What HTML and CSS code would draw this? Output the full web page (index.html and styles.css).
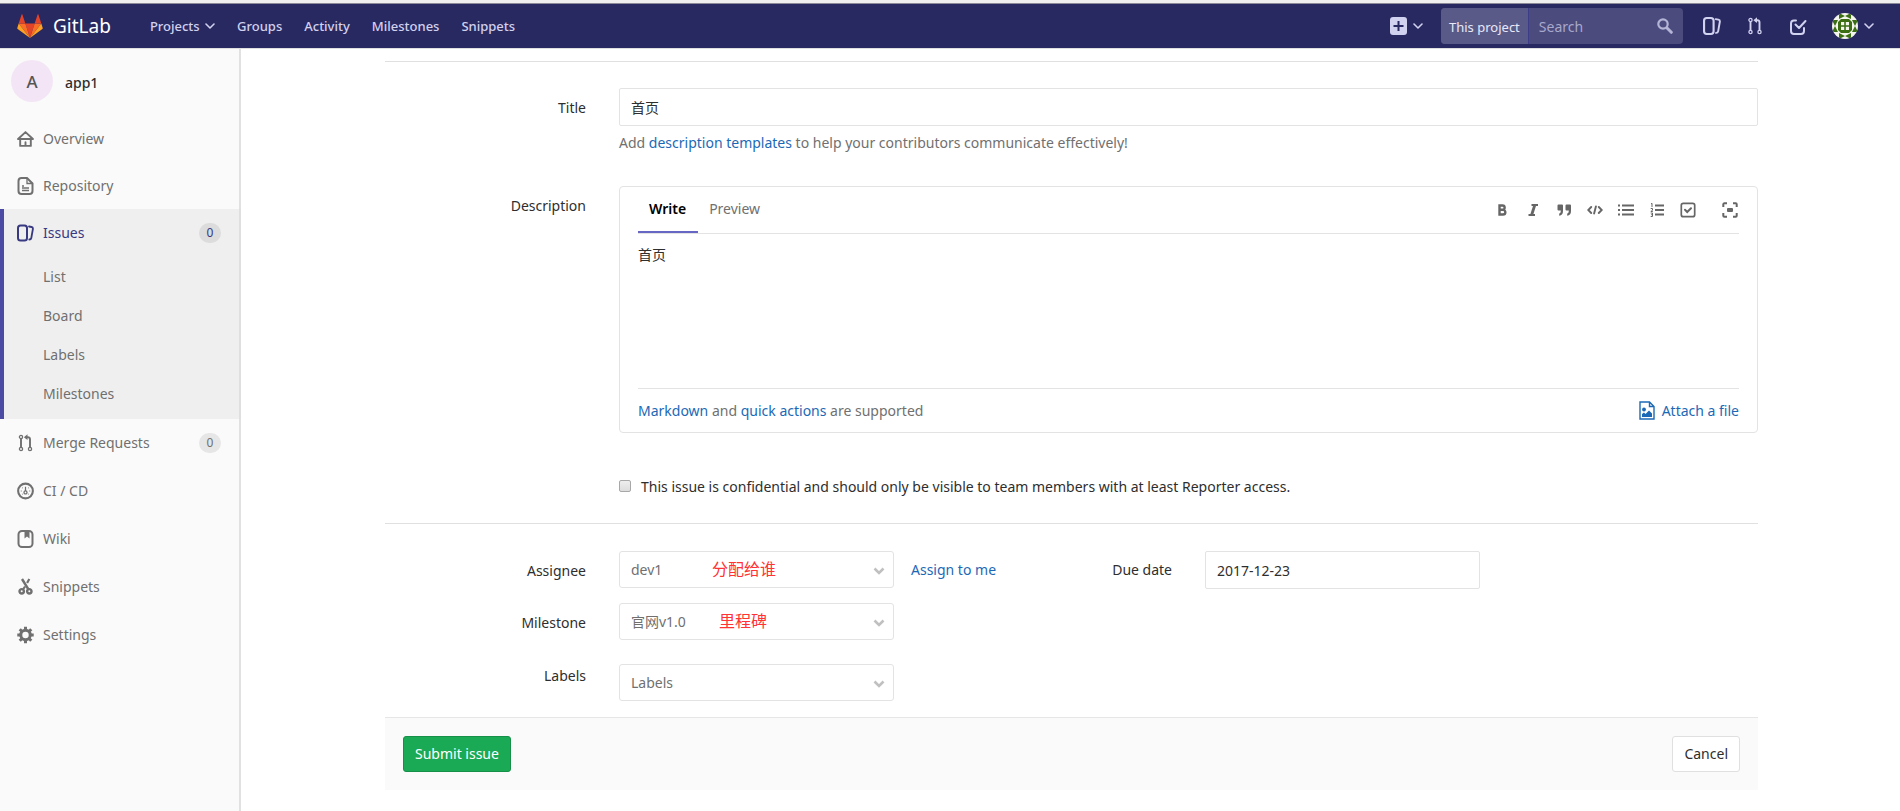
FILE: index.html
```html
<!DOCTYPE html>
<html lang="en">
<head>
<meta charset="utf-8">
<title>New Issue · app1 · GitLab</title>
<link rel="stylesheet" href="styles.css">
</head>
<body>
<svg class="sprite" aria-hidden="true">
  <symbol id="chevron" viewBox="0 0 10 6"><path d="M1 1l4 4 4-4" fill="none" stroke="currentColor" stroke-width="1.6" stroke-linecap="round" stroke-linejoin="round"/></symbol>
  <symbol id="chevron-bold" viewBox="0 0 12 8"><path d="M1.500 1.500L6 6l4.500-4.500" fill="none" stroke="currentColor" stroke-width="2.600"/></symbol>
  <symbol id="home" viewBox="0 0 16 16"><path d="M1 8h14L8 1.5zM3 8v6.500h10V8M8 11v3.500" fill="none" stroke="currentColor" stroke-width="1.800" stroke-linejoin="round" stroke-linecap="round"/></symbol>
  <symbol id="doc" viewBox="0 0 16 18"><path d="M4 1h5.500L15 6.500V14a3 3 0 0 1-3 3H4a3 3 0 0 1-3-3V4a3 3 0 0 1 3-3z" fill="none" stroke="currentColor" stroke-width="2"/><path d="M9.500 1v5.500H15M4.500 9h2M4.500 11h7M4.500 13.500h7" fill="none" stroke="currentColor" stroke-width="1.300"/></symbol>
  <symbol id="issues" viewBox="0 0 17 17"><rect x="1" y="1" width="9" height="15" rx="2.500" fill="none" stroke="currentColor" stroke-width="2"/><path d="M12 2l2.500.5c1 .2 1.600.9 1.400 2L14.300 13.500c-.2 1-.8 1.500-2 1.500" fill="none" stroke="currentColor" stroke-width="1.800" stroke-linecap="round"/></symbol>
  <symbol id="merge" viewBox="0 0 16 18"><g fill="none" stroke="currentColor"><circle cx="3.500" cy="3" r="1.600" stroke-width="1.300"/><circle cx="3.500" cy="15" r="1.600" stroke-width="1.300"/><circle cx="12.500" cy="15" r="1.600" stroke-width="1.300"/><path d="M3.500 4.800v8.400M8 3.200h2.500a2 2 0 0 1 2 2v8" stroke-width="1.900"/></g><path d="M10 .3v5.800L6.400 3.200z" fill="currentColor"/></symbol>
  <symbol id="todo" viewBox="0 0 16 18"><path d="M6 3.500H4a3 3 0 0 0-3 3V14a3 3 0 0 0 3 3h7a3 3 0 0 0 3-3v-3M5.500 7.500l3.500 3.500 6.500-7" fill="none" stroke="currentColor" stroke-width="2" stroke-linecap="round" stroke-linejoin="round"/></symbol>
  <symbol id="gauge" viewBox="0 0 18 18"><circle cx="9" cy="9" r="7.800" fill="none" stroke="currentColor" stroke-width="2.200"/><circle cx="9" cy="10.500" r="1.600" fill="none" stroke="currentColor" stroke-width="1.400"/><path d="M9 4.500V9M4 9h1M13 9h1M5.500 5.500l.5.500M12.500 5.500l-.5.500M5.500 12.500l.5-.5M12.500 12.500l-.5-.5" stroke="currentColor" stroke-width="1.300"/></symbol>
  <symbol id="book" viewBox="0 0 16 18"><rect x="1" y="1" width="14" height="16" rx="3.500" fill="none" stroke="currentColor" stroke-width="2"/><path d="M7 1.500h5v7L9.500 6.500 7 8.500z" fill="currentColor"/></symbol>
  <symbol id="scissors" viewBox="0 0 16 18"><g fill="none" stroke="currentColor"><circle cx="4.200" cy="13.300" r="2.200" stroke-width="2.400"/><circle cx="11.800" cy="13.300" r="2.200" stroke-width="2.400"/><path d="M4.500 1l6.500 10.500" stroke-width="2.400"/><path d="M11.800 1L9.600 5M7.500 8.500L5.500 11.500" stroke-width="2.200"/></g></symbol>
  <symbol id="gear" viewBox="0 0 18 18"><circle cx="9" cy="9" r="5" fill="none" stroke="currentColor" stroke-width="3.200"/><path d="M9 .3v3M9 14.700v3M.3 9h3M14.700 9h3M2.900 2.900l2.100 2.100M13 13l2.100 2.100M2.900 15.100L5 13M13 5l2.100-2.100" stroke="currentColor" stroke-width="3.200"/></symbol>
  <symbol id="search" viewBox="0 0 16 16"><circle cx="6" cy="6" r="4.700" fill="none" stroke="currentColor" stroke-width="2.200"/><path d="M9.800 9.800l4.500 4.500" stroke="currentColor" stroke-width="3" stroke-linecap="round"/></symbol>
  <symbol id="bold" viewBox="0 0 16 16"><path d="M5.500 3.500H8.500a2 2 0 0 1 0 4.300H5.500zM5.500 7.800H9a2.300 2.300 0 0 1 0 4.700H5.500z" fill="none" stroke="currentColor" stroke-width="2.400"/></symbol>
  <symbol id="italic" viewBox="0 0 16 16"><path d="M6.500 3h6.500M3.500 13H10" stroke="currentColor" stroke-width="2"/><path d="M9.800 3l-3.200 10" stroke="currentColor" stroke-width="2.800"/></symbol>
  <symbol id="quote" viewBox="0 0 16 16"><path d="M1.500 3.500a1 1 0 0 1 1-1h3.500a1 1 0 0 1 1 1V9c0 3-1.200 4.200-3.800 4.700V11.500C4.300 11.200 4.800 10.500 4.800 8.500H2.500a1 1 0 0 1-1-1zM9.500 3.500a1 1 0 0 1 1-1H14a1 1 0 0 1 1 1V9c0 3-1.200 4.200-3.800 4.700V11.500c1.100-.3 1.600-1 1.600-3h-2.300a1 1 0 0 1-1-1z" fill="currentColor"/></symbol>
  <symbol id="code" viewBox="0 0 16 16"><path d="M4.200 5L1.300 8l2.900 3M11.800 5l2.900 3-2.900 3M8.900 4.500l-1.800 7" fill="none" stroke="currentColor" stroke-width="1.900" stroke-linecap="round"/></symbol>
  <symbol id="bullets" viewBox="0 0 16 16"><path d="M4 3.500h12M4 8h12M4 12.500h12" stroke="currentColor" stroke-width="1.800"/><path d="M0 3.500h2M0 8h2M0 12.500h2" stroke="currentColor" stroke-width="1.800"/></symbol>
  <symbol id="numbers" viewBox="0 0 16 16"><path d="M6 3.500h9M6 8h9M6 12.500h9" stroke="currentColor" stroke-width="1.800"/><path d="M2 2l1-.7V5M1.700 6.500h1.800V8L2 9.500h1.800M1.700 11h1.800v3.500H1.700M2.200 12.700h1.300" fill="none" stroke="currentColor"/></symbol>
  <symbol id="task" viewBox="0 0 16 16"><rect x="1.300" y="1.300" width="13.400" height="13.400" rx="2" fill="none" stroke="currentColor" stroke-width="1.700"/><path d="M5 7.800l2.200 2.200L11 6.200" fill="none" stroke="currentColor" stroke-width="2" stroke-linecap="round"/></symbol>
  <symbol id="full" viewBox="0 0 16 16"><path d="M1.300 5V2.300a1 1 0 0 1 1-1H5M11 1.300h2.700a1 1 0 0 1 1 1V5M14.700 11v2.700a1 1 0 0 1-1 1H11M5 14.700H2.300a1 1 0 0 1-1-1V11" fill="none" stroke="currentColor" stroke-width="2"/><rect x="5" y="6" width="6" height="4" rx="1" fill="currentColor"/></symbol>
  <symbol id="image" viewBox="0 0 16 19"><path d="M1 1h9.500L15 5.500V18H1zM10.500 1v4.500H15" fill="none" stroke="currentColor" stroke-width="1.400"/><circle cx="5" cy="8.500" r="1.900" fill="currentColor"/><path d="M3 16v-3l2-1.500 1.500 1.500L10 9.500l3 3V16z" fill="currentColor"/></symbol>
</svg>

<header class="topbar">
  <a class="brand" href="#">
    <svg class="tanuki" viewBox="0 0 36 34" aria-hidden="true"><path fill="#e24329" d="M18 34l6.600-20.400H11.400z"/><path fill="#fc6d26" d="M18 34L11.400 13.600H2z"/><path fill="#fca326" d="M2 13.600L0 19.800c-.2.600 0 1.200.5 1.500L18 34z"/><path fill="#e24329" d="M2 13.600h9.400L7.300 1c-.2-.7-1.100-.7-1.300 0z"/><path fill="#fc6d26" d="M18 34l6.600-20.400H34z"/><path fill="#fca326" d="M34 13.600l2 6.200c.2.600 0 1.200-.5 1.500L18 34z"/><path fill="#e24329" d="M34 13.600h-9.400L28.700 1c.2-.7 1.100-.7 1.300 0z"/></svg>
    <span>GitLab</span>
  </a>
  <nav class="mainnav" aria-label="Main">
    <a href="#">Projects <svg class="chev"><use href="#chevron"/></svg></a>
    <a href="#">Groups</a>
    <a href="#">Activity</a>
    <a href="#">Milestones</a>
    <a href="#">Snippets</a>
  </nav>
  <div class="tools">
    <button class="plus" type="button" aria-label="New">
      <svg class="plus-icon" viewBox="0 0 17 18"><rect width="17" height="18" rx="3" fill="currentColor"/><path d="M8.500 4v10M3.500 9h10" stroke="#292961" stroke-width="2"/></svg>
      <svg class="chev"><use href="#chevron"/></svg>
    </button>
    <form class="search">
      <span class="scope">This project</span>
      <input type="search" placeholder="Search" aria-label="Search">
      <svg class="search-icon"><use href="#search"/></svg>
    </form>
    <a class="tool" href="#" aria-label="Issues"><svg><use href="#issues"/></svg></a>
    <a class="tool" href="#" aria-label="Merge requests"><svg><use href="#merge"/></svg></a>
    <a class="tool" href="#" aria-label="Todos"><svg><use href="#todo"/></svg></a>
    <button class="user" type="button" aria-label="User menu">
      <svg class="identicon" viewBox="0 0 26 26"><clipPath id="round"><circle cx="13" cy="13" r="13"/></clipPath><g clip-path="url(#round)"><rect width="26" height="26" fill="#f4f6ee"/><g fill="#3b6e12"><path d="M9 6h8l3 3v8l-3 3H9l-3-3V9zM7 0l6 3-6 3zM19 0v6l-6-3zM7 26v-6l6 3zM19 26l-6-3 6-3zM0 7h6l-3 6zM0 19l3-6 3 6zM26 7l-3 6-3-6zM26 19h-6l3-6z"/></g><path d="M9 9h3.200v3.200H9zM13.800 9H17v3.200h-3.200zM9 13.800h3.200V17H9zM13.800 13.800H17V17h-3.200z" fill="#f4f6ee"/></g></svg>
      <svg class="chev"><use href="#chevron"/></svg>
    </button>
  </div>
</header>

<div class="page">
  <aside class="sidebar">
    <a class="project" href="#"><span class="avatar">A</span><span class="project-name">app1</span></a>
    <nav aria-label="Project">
      <a class="item" href="#"><svg><use href="#home"/></svg>Overview</a>
      <a class="item" href="#"><svg><use href="#doc"/></svg>Repository</a>
      <div class="active">
        <a class="item" href="#"><svg><use href="#issues"/></svg>Issues<span class="count">0</span></a>
        <a class="sub" href="#">List</a>
        <a class="sub" href="#">Board</a>
        <a class="sub" href="#">Labels</a>
        <a class="sub" href="#">Milestones</a>
      </div>
      <a class="item" href="#"><svg><use href="#merge"/></svg>Merge Requests<span class="count">0</span></a>
      <a class="item" href="#"><svg><use href="#gauge"/></svg>CI / CD</a>
      <a class="item" href="#"><svg><use href="#book"/></svg>Wiki</a>
      <a class="item" href="#"><svg><use href="#scissors"/></svg>Snippets</a>
      <a class="item" href="#"><svg><use href="#gear"/></svg>Settings</a>
    </nav>
  </aside>

  <main>
    <form class="issue">
      <div class="row title-row">
        <label for="title">Title</label>
        <div>
          <input class="field" id="title" type="text" value="首页">
          <p class="help">Add <a href="#">description templates</a> to help your contributors communicate effectively!</p>
        </div>
      </div>
      <div class="row desc-row">
        <label for="description">Description</label>
        <div class="editor">
          <div class="editor-head">
            <button class="tab selected" type="button">Write</button>
            <button class="tab" type="button">Preview</button>
            <div class="format">
              <button type="button" aria-label="Bold"><svg><use href="#bold"/></svg></button>
              <button type="button" aria-label="Italic"><svg><use href="#italic"/></svg></button>
              <button type="button" aria-label="Quote"><svg><use href="#quote"/></svg></button>
              <button type="button" aria-label="Code"><svg><use href="#code"/></svg></button>
              <button type="button" aria-label="Bullet list"><svg><use href="#bullets"/></svg></button>
              <button type="button" aria-label="Numbered list"><svg><use href="#numbers"/></svg></button>
              <button type="button" aria-label="Task list"><svg><use href="#task"/></svg></button>
              <button class="fullscreen" type="button" aria-label="Full screen"><svg><use href="#full"/></svg></button>
            </div>
          </div>
          <textarea id="description">首页</textarea>
          <div class="editor-foot">
            <span><a href="#">Markdown</a> and <a href="#">quick actions</a> are supported</span>
            <button class="attach" type="button"><svg><use href="#image"/></svg>Attach a file</button>
          </div>
        </div>
      </div>
      <div class="confidential">
        <input id="confidential" type="checkbox">
        <label for="confidential">This issue is confidential and should only be visible to team members with at least Reporter access.</label>
      </div>

      <div class="meta">
        <div>
          <div class="row assignee">
            <label for="assignee">Assignee</label>
            <div class="inline">
              <div class="select"><select id="assignee"><option>dev1</option></select><svg><use href="#chevron-bold"/></svg><span class="note">分配给谁</span></div>
              <a href="#">Assign to me</a>
            </div>
          </div>
          <div class="row milestone">
            <label for="milestone">Milestone</label>
            <div class="select"><select id="milestone"><option>官网v1.0</option></select><svg><use href="#chevron-bold"/></svg><span class="note note-milestone">里程碑</span></div>
          </div>
          <div class="row labels">
            <label for="labels">Labels</label>
            <div class="select"><select id="labels"><option>Labels</option></select><svg><use href="#chevron-bold"/></svg></div>
          </div>
        </div>
        <div class="due">
          <label for="due">Due date</label>
          <input class="field" id="due" type="text" value="2017-12-23">
        </div>
      </div>

      <div class="actions">
        <button class="btn submit" type="submit">Submit issue</button>
        <button class="btn cancel" type="button">Cancel</button>
      </div>
    </form>
  </main>
</div>
</body>
</html>
```

FILE: styles.css
```css
* { box-sizing: border-box; }

body {
  margin: 0;
  min-height: 100vh;
  display: flex;
  flex-direction: column;
  background: #fff;
  color: #2e2e2e;
  font: 14px/20px "Noto Sans", "Noto Sans CJK SC", sans-serif;
}

a { color: #1b69b6; text-decoration: none; }
button, input, select, textarea { font: inherit; color: inherit; }
button { margin: 0; padding: 0; border: 0; background: none; cursor: pointer; }
.sprite { position: absolute; width: 0; height: 0; }

/* Top bar */
.topbar {
  display: flex;
  align-items: center;
  height: 49px;
  padding: 1px 26px 0 17px;
  background: #292961;
  border-top: 3px solid #efefef;
  border-bottom: 1px solid #dfdfdf;
  box-shadow: inset 0 1px #8a8a98;
  color: #d1d1f0;
}
.brand { display: flex; align-items: center; gap: 10px; color: #fff; font-size: 19px; }
.tanuki { width: 26px; height: 24px; }
.mainnav { display: flex; gap: 22px; margin-left: 39px; }
.mainnav a { color: #d1d1f0; font-size: 13px; font-weight: 500; }
.chev { width: 10px; height: 6px; margin-left: 2px; vertical-align: 2px; }
.tools { display: flex; align-items: center; margin-left: auto; }
.plus, .user { display: flex; align-items: center; gap: 4px; color: #d1d1f0; }
.plus-icon { width: 17px; height: 18px; }
.search {
  display: flex;
  align-items: center;
  width: 242px;
  height: 36px;
  margin: 0 20px 0 18px;
  padding-right: 10px;
  border-radius: 4px;
  background: #4b4b7d;
  overflow: hidden;
}
.scope { padding: 9px 8px 7px; border-right: 1px solid #3c3c88; background: #5a5a88; color: #e8e8f8; font-size: 13px; white-space: nowrap; }
.search input { flex: 1; min-width: 0; padding: 2px 10px 0; border: 0; background: none; }
.search input::placeholder { color: #a8a8cc; opacity: 1; }
.search-icon { width: 16px; height: 16px; color: #b4b4d6; }
.tool { margin-right: 25px; color: #d1d1f0; }
.tool svg { display: block; width: 18px; height: 18px; }
.identicon { width: 26px; height: 26px; }

.page { display: flex; flex: 1; }

/* Sidebar */
.sidebar { flex: none; width: 241px; border-right: 2px solid #e1e1e1; background: #fafafa; }
.project { display: flex; align-items: center; gap: 12px; padding: 11px 11px 13px; color: #2e2e2e; }
.project-name { padding-top: 3px; font-weight: 500; }
.avatar {
  width: 42px;
  height: 42px;
  padding-top: 1px;
  border-radius: 50%;
  background: #f3e5f5;
  color: #555;
  font-size: 17px;
  font-weight: 500;
  line-height: 42px;
  text-align: center;
}
.item { display: flex; align-items: center; height: 47px; padding: 0 18px 0 17px; color: #707070; }
.item svg { width: 17px; height: 18px; margin-right: 9px; }
.count { margin-left: auto; width: 22px; border-radius: 10px; background: #e6e6e6; font-size: 12px; text-align: center; }
.active { margin-right: -2px; padding-bottom: 6px; border-right: 2px solid #dfdfdf; background: #efefef; box-shadow: inset 4px 0 #4b4ba3; }
.active .item { height: 48px; color: #393982; }
.active .count { background: #dcdcdc; }
.active ~ .item { height: 48px; }
.sub { display: block; padding: 10px 0 9px 43px; color: #707070; }

/* Issue form */
main { flex: 1; min-width: 0; padding: 12px 142px 0 144px; }
.issue { border-top: 1px solid #e0e0e0; padding-top: 26px; }
.row { display: grid; grid-template-columns: 201px minmax(0, 1fr); column-gap: 33px; align-items: start; }
.row > label { padding-top: 10px; text-align: right; }
.field { display: block; width: 100%; height: 38px; padding: 0 11px; border: 1px solid #e3e3e3; border-radius: 2px; background: #fff; }
.help { margin: 7px 0 0; color: #707070; }
.desc-row { margin-top: 33px; }
.editor { padding: 0 18px; border: 1px solid #e3e3e3; border-radius: 4px; }
.editor-head { display: flex; height: 47px; border-bottom: 1px solid #e3e3e3; }
.tab { padding: 0 12px 2px 11px; color: #707070; }
.tab.selected { height: 46px; padding-bottom: 0; border-bottom: 2px solid #6666c4; color: #000; font-weight: 600; }
.format { display: flex; align-items: center; gap: 15px; margin-left: auto; color: #666; }
.format svg { display: block; width: 16px; height: 16px; }
.fullscreen { margin-left: 11px; margin-right: 1px; }
textarea { display: block; width: 100%; height: 154px; padding: 11px 0; border: 0; outline: 0; resize: none; }
.editor-foot { display: flex; align-items: center; justify-content: space-between; height: 44px; border-top: 1px solid #e3e3e3; color: #707070; }
.attach { display: flex; align-items: center; gap: 7px; color: #1b69b6; }
.attach svg { width: 16px; height: 19px; }
.confidential { display: flex; align-items: center; gap: 10px; margin: 44px 0 26px 234px; }
.confidential input {
  appearance: none;
  width: 12px;
  height: 12px;
  margin: 0 0 2px;
  border: 1px solid #a8a8a8;
  border-radius: 2px;
  background: linear-gradient(#eee, #ddd);
}
.meta { display: flex; justify-content: space-between; padding: 27px 278px 16px 0; border-top: 1px solid #e0e0e0; }
.inline { display: flex; align-items: center; gap: 17px; }
.select { position: relative; width: 275px; }
.select select { display: block; appearance: none; width: 100%; height: 37px; padding: 0 11px; border: 1px solid #e3e3e3; border-radius: 3px; background: #fff; color: #707070; }
.select svg { position: absolute; top: 16px; right: 9px; width: 12px; height: 8px; color: #c0c0c0; }
.note { position: absolute; top: 8px; left: 93px; color: #f33; font-size: 16px; pointer-events: none; }
.note-milestone { left: 100px; }
.milestone { margin-top: 15px; }
.labels { margin-top: 24px; }
.labels > label { padding-top: 2px; }
.due { display: grid; grid-template-columns: auto 275px; gap: 33px; align-items: start; }
.due label { padding-top: 9px; }
.actions { display: flex; justify-content: space-between; padding: 18px; border-top: 1px solid #e6e6e6; background: #fafafa; }
.btn { height: 36px; padding: 0 11px; border: 1px solid #e0e0e0; border-radius: 3px; background: #fff; }
.submit { border-color: #168f48; background: #1aaa55; color: #fff; }
```
